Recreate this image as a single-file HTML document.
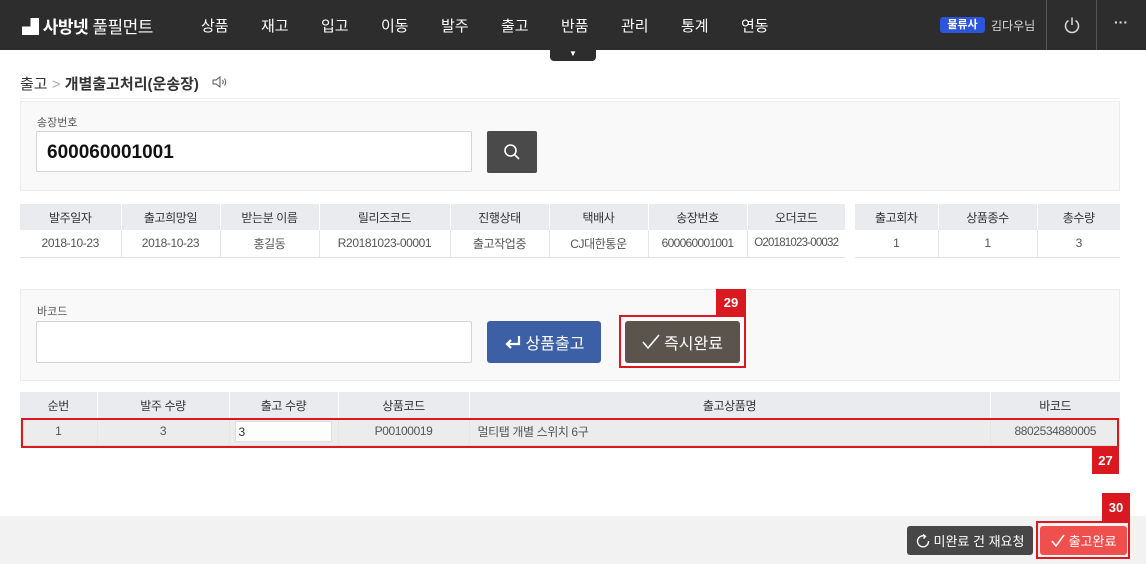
<!DOCTYPE html><html><head><meta charset="utf-8"><style>
*{margin:0;padding:0;box-sizing:border-box}
body{width:1146px;height:564px;position:relative;background:#fff;font-family:"Liberation Sans","Noto Sans CJK KR",sans-serif;overflow:hidden;color:#333}
.a{position:absolute}
.hd{left:0;top:0;width:1146px;height:50px;background:#2d2d2d}
.nav{top:15px;color:#fff;font-size:15px}
.panel{background:#f9f9f9;border:1px solid #ececec}
.lbl{font-size:11px;color:#555}
.inp{background:#fff;border:1px solid #d4d4d4;border-radius:2px}
table{border-collapse:collapse;font-size:12px;position:absolute;table-layout:fixed;letter-spacing:-0.4px}
th{background:#e9ebee;font-weight:normal;color:#333;height:26px;border-left:1px solid #fff;white-space:nowrap}
td{height:27px;text-align:center;border-left:1px solid #e6e6e6;border-bottom:1px solid #e0e0e0;color:#555;white-space:nowrap;overflow:hidden}
td:first-child,th:first-child{border-left:none}
.btn{color:#fff;border-radius:3px;display:flex;align-items:center;justify-content:center;font-size:16px}
.btn svg{margin-right:4px}
.rb{border:2px solid #d9181f}
.bd{background:#d9181f;color:#fff;font-size:13px;font-weight:bold;display:flex;align-items:center;justify-content:center}
</style></head><body>
<div class="a hd"></div>
<div class="a" style="left:22px;top:13px;color:#fff;font-size:17px;font-weight:bold;letter-spacing:-0.5px">▟ 사방넷 <span style="font-weight:normal">풀필먼트</span></div>
<div class="a nav" style="left:201px">상품</div><div class="a nav" style="left:261px">재고</div><div class="a nav" style="left:321px">입고</div><div class="a nav" style="left:381px">이동</div><div class="a nav" style="left:441px">발주</div><div class="a nav" style="left:501px">출고</div><div class="a nav" style="left:561px">반품</div><div class="a nav" style="left:621px">관리</div><div class="a nav" style="left:681px">통계</div><div class="a nav" style="left:741px">연동</div>
<div class="a" style="left:550px;top:48px;width:46px;height:13px;background:#2d2d2d;border-radius:0 0 4px 4px;color:#fff;font-size:8px;text-align:center;line-height:11px">▼</div>
<div class="a" style="left:940px;top:17px;width:45px;height:16px;background:#2b56d9;border-radius:3px;color:#fff;font-size:11px;font-weight:bold;text-align:center;line-height:16px">물류사</div>
<div class="a" style="left:991px;top:17px;color:#ddd;font-size:12px">김다우님</div>
<div class="a" style="left:1046px;top:0;width:1px;height:50px;background:#555"></div>
<div class="a" style="left:1096px;top:0;width:1px;height:50px;background:#555"></div>
<svg class="a" style="left:1063px;top:16px" width="18" height="18" viewBox="0 0 18 18" fill="none" stroke="#ddd" stroke-width="1.5"><path d="M5.5 4.5A6.5 6.5 0 1 0 12.5 4.5"/><path d="M9 1.5V9"/></svg>
<div class="a" style="left:1114px;top:14px;color:#ddd;font-size:14px;font-weight:bold">···</div>
<div class="a" style="left:20px;top:73px;font-size:15px;color:#333">출고 <span style="color:#aaa">&gt;</span> <b>개별출고처리(운송장)</b></div>
<svg class="a" style="left:212px;top:76px" width="16" height="12" viewBox="0 0 16 12" fill="none" stroke="#555" stroke-width="1"><path d="M1 4H4L8 1V11L4 8H1Z"/><path d="M10.5 4Q12 6 10.5 8M12.5 2.5Q15 6 12.5 9.5"/></svg>
<div class="a" style="left:20px;top:98px;width:1100px;height:1px;background:#eee"></div>
<div class="a panel" style="left:20px;top:101px;width:1100px;height:90px"></div>
<div class="a lbl" style="left:37px;top:114px">송장번호</div>
<div class="a inp" style="left:36px;top:131px;width:436px;height:41px;font-size:19px;font-weight:bold;color:#111;padding:10px 10px">600060001001</div>
<div class="a" style="left:487px;top:131px;width:50px;height:42px;background:#4a4a4a;border-radius:2px"></div>
<svg class="a" style="left:503px;top:143px" width="18" height="18" viewBox="0 0 18 18" fill="none" stroke="#fff" stroke-width="1.6"><circle cx="7.5" cy="7.5" r="5.5"/><path d="M11.5 11.5L16 16"/></svg>
<table style="left:20px;top:204px;width:825px"><colgroup><col style="width:101px"><col style="width:99px"><col style="width:99px"><col style="width:131px"><col style="width:99px"><col style="width:99px"><col style="width:99px"><col style="width:98px"></colgroup><tr><th>발주일자</th><th>출고희망일</th><th>받는분 이름</th><th>릴리즈코드</th><th>진행상태</th><th>택배사</th><th>송장번호</th><th>오더코드</th></tr>
<tr><td>2018-10-23</td><td>2018-10-23</td><td>홍길동</td><td>R20181023-00001</td><td>출고작업중</td><td>CJ대한통운</td><td style="letter-spacing:-0.7px">600060001001</td><td style="letter-spacing:-0.8px;font-size:11.5px">O20181023-00032</td></tr></table>
<table style="left:855px;top:204px;width:265px"><colgroup><col style="width:83px"><col style="width:99px"><col style="width:83px"></colgroup><tr><th>출고회차</th><th>상품종수</th><th>총수량</th></tr><tr><td>1</td><td>1</td><td>3</td></tr></table>
<div class="a panel" style="left:20px;top:289px;width:1100px;height:92px"></div>
<div class="a lbl" style="left:37px;top:303px">바코드</div>
<div class="a inp" style="left:36px;top:321px;width:436px;height:42px"></div>
<div class="a btn" style="left:487px;top:321px;width:114px;height:42px;background:#3c5fa6"><svg width="18" height="16" viewBox="0 0 18 16" fill="none" stroke="#fff" stroke-width="2.2"><path d="M15 2V10H3M7 6L3 10L7 14"/></svg>상품출고</div>
<div class="a rb" style="left:619px;top:315px;width:127px;height:53px"></div>
<div class="a bd" style="left:716px;top:289px;width:30px;height:27px">29</div>
<div class="a btn" style="left:625px;top:321px;width:115px;height:42px;background:#5a544d"><svg width="18" height="16" viewBox="0 0 18 16" fill="none" stroke="#fff" stroke-width="1.6"><path d="M1 8L6 14L17 1"/></svg>즉시완료</div>
<table style="left:20px;top:392px;width:1100px"><colgroup><col style="width:77px"><col style="width:132px"><col style="width:109px"><col style="width:131px"><col style="width:521px"><col style="width:130px"></colgroup><tr><th>순번</th><th>발주 수량</th><th>출고 수량</th><th>상품코드</th><th>출고상품명</th><th>바코드</th></tr>
<tr><td style="background:#ececec">1</td><td style="background:#ececec">3</td><td style="background:#ececec;text-align:left;padding-left:5px"><div style="width:97px;height:21px;background:#fdfdfb;border:1px solid #ddd;text-align:left;padding:3px 3px;color:#333">3</div></td><td style="background:#ececec">P00100019</td><td style="background:#ececec;text-align:left;padding-left:8px">멀티탭 개별 스위치 6구</td><td style="background:#ececec">8802534880005</td></tr></table>
<div class="a rb" style="left:21px;top:418px;width:1098px;height:30px"></div>
<div class="a bd" style="left:1092px;top:447px;width:27px;height:27px">27</div>
<div class="a" style="left:0;top:516px;width:1146px;height:48px;background:#f2f2f2"></div>
<div class="a btn" style="left:907px;top:526px;width:126px;height:29px;background:#474747;font-size:13px"><svg width="14" height="14" viewBox="0 0 14 14" fill="none" stroke="#fff" stroke-width="1.4"><path d="M9 2.2A5.5 5.5 0 1 0 12.5 7"/><path d="M7 0.5L9.5 2.3L7.5 4.5"/></svg>미완료 건 재요청</div>
<div class="a rb" style="left:1036px;top:521px;width:94px;height:38px"></div>
<div class="a bd" style="left:1102px;top:493px;width:28px;height:28px">30</div>
<div class="a btn" style="left:1040px;top:526px;width:87px;height:29px;background:#f0504d;font-size:13px"><svg width="14" height="13" viewBox="0 0 14 13" fill="none" stroke="#fff" stroke-width="1.5"><path d="M1 7L5 12L13 1"/></svg>출고완료</div>
</body></html>
